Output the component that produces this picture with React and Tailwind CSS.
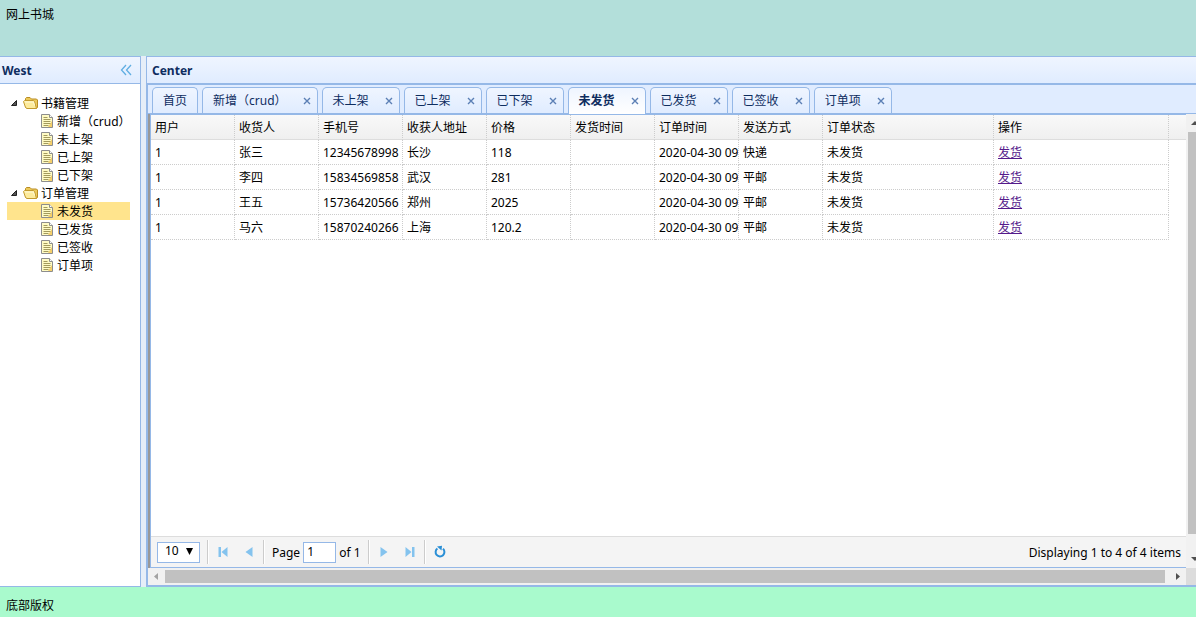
import React from "react";

const bookPages = ["新增（crud）", "未上架", "已上架", "已下架"];
const orderPages = ["未发货", "已发货", "已签收", "订单项"];
const tabs = ["首页", ...bookPages, ...orderPages];

const columns = [
  { title: "用户", width: "w-[84px]" },
  { title: "收货人", width: "w-[84px]" },
  { title: "手机号", width: "w-[84px]" },
  { title: "收获人地址", width: "w-[84px]" },
  { title: "价格", width: "w-[84px]" },
  { title: "发货时间", width: "w-[84px]" },
  { title: "订单时间", width: "w-[84px]" },
  { title: "发送方式", width: "w-[84px]" },
  { title: "订单状态", width: "w-[171px]" },
  { title: "操作", width: "w-[175px]" },
];

const rows = [
  ["1", "张三", "12345678998", "长沙", "118", "", "2020-04-30 09", "快递", "未发货"],
  ["1", "李四", "15834569858", "武汉", "281", "", "2020-04-30 09", "平邮", "未发货"],
  ["1", "王五", "15736420566", "郑州", "2025", "", "2020-04-30 09", "平邮", "未发货"],
  ["1", "马六", "15870240266", "上海", "120.2", "", "2020-04-30 09", "平邮", "未发货"],
];

function FolderIcon() {
  return (
    <svg width="16" height="16" viewBox="0 0 16 16" className="shrink-0" aria-hidden="true">
      <path d="M2.500 12V3.500L3.500 2.500H7L8.500 4H13.500L14.500 5V12.500L13.500 13.500H4z" fill="#ecc95a" stroke="#b98d25" strokeLinejoin="round" />
      <path d="M0.500 6.500L1.500 5.500H10.500L11.500 6.500L13.500 13.500H4L2.500 12.500z" fill="#fdeb9c" stroke="#c29a2e" strokeLinejoin="round" />
      <path d="M2 7H10.500L11.500 10.500" fill="none" stroke="#fffbdc" />
    </svg>
  );
}

function FileIcon() {
  return (
    <svg width="16" height="16" viewBox="0 0 16 16" className="shrink-0" aria-hidden="true">
      <path d="M2.5 1.5h8l3 3v10h-11z" fill="#fffbc4" stroke="#8d8d8d" />
      <path d="M13 8v6H9z" fill="#f5cf6a" />
      <path d="M10.5 1.5v3h3" fill="#fff" stroke="#8d8d8d" />
      <path d="M4.5 4.5h4M4.5 6.5h7M4.5 8.5h7M4.5 10.5h7M4.5 12.5h5" stroke="#a39a5c" />
    </svg>
  );
}

function TreeArrow() {
  return (
    <svg width="16" height="18" viewBox="0 0 16 18" className="shrink-0" aria-hidden="true">
      <path d="M9.5 6.5v5h-5z" fill="#555" stroke="#222" strokeLinejoin="round" />
    </svg>
  );
}

function TreeGroup({ label, items, selected }) {
  return (
    <li>
      <button type="button" className="flex h-[18px] w-full items-center text-left">
        <TreeArrow />
        <FolderIcon />
        <span className="px-0.5 pt-0.5">{label}</span>
      </button>
      <ul>
        {items.map((item) => (
          <li key={item}>
            <button
              type="button"
              className={
                item === selected
                  ? "flex h-[18px] w-full items-center whitespace-nowrap bg-[#ffe48d] pl-8 text-left"
                  : "flex h-[18px] w-full items-center whitespace-nowrap pl-8 text-left"
              }
            >
              <FileIcon />
              <span className="px-0.5 pt-0.5">{item}</span>
            </button>
          </li>
        ))}
      </ul>
    </li>
  );
}

function Tab({ label, active, closable }) {
  return (
    <div
      className={
        active
          ? "-mb-px flex items-center rounded-t-[5px] border border-b-0 border-[#95b8e7] bg-linear-to-b from-[#eff5ff] to-white font-bold text-[#0e2d5f]"
          : "flex items-center rounded-t-[5px] border border-b-0 border-[#95b8e7] bg-linear-to-b from-[#eff5ff] to-[#e0ecff] text-[#0e2d5f]"
      }
    >
      <button type="button" role="tab" aria-selected={active} className="h-full whitespace-nowrap px-2.5">
        {label}
      </button>
      {closable && (
        <button type="button" aria-label={`关闭 ${label}`} className="mx-[5px] flex h-4 w-2.5 items-center justify-center">
          <svg width="8" height="8" viewBox="0 0 8 8" aria-hidden="true">
            <path d="M1 1l6 6M7 1l-6 6" stroke="#5b7fb5" strokeWidth="1.4" />
          </svg>
        </button>
      )}
    </div>
  );
}

function Separator() {
  return <div className="mx-px h-6 w-0.5 border-l border-[#ccc] bg-white" />;
}

function PagerButton({ label, children }) {
  return (
    <button type="button" aria-label={label} className="flex h-[26px] w-[26px] items-center justify-center">
      <svg width="16" height="16" viewBox="0 0 16 16" aria-hidden="true">
        {children}
      </svg>
    </button>
  );
}

function Pager() {
  return (
    <div className="flex h-[31px] shrink-0 items-center border-t border-[#ddd] bg-[#f4f4f4] pl-1.5 pr-[5px]">
      <div className="relative mr-1.5">
        <select
          aria-label="每页条数"
          defaultValue="10"
          className="block h-[21px] w-[43px] appearance-none border border-[#95b8e7] bg-white pb-0.5 pl-[7px] leading-none"
        >
          <option>10</option>
          <option>20</option>
          <option>30</option>
        </select>
        <svg width="7" height="7" viewBox="0 0 7 7" className="pointer-events-none absolute right-[7px] top-1.5" aria-hidden="true">
          <path d="M0 0h7L3.500 7z" fill="#000" />
        </svg>
      </div>
      <Separator />
      <PagerButton label="第一页">
        <path d="M3.500 3h2.500v10H3.500zM12.500 3v10L6.500 8z" fill="#84c3ee" />
      </PagerButton>
      <PagerButton label="上一页">
        <path d="M11.500 3v10L4.500 8z" fill="#84c3ee" />
      </PagerButton>
      <Separator />
      <label className="ml-1.5 flex items-center">
        <span className="pt-0.5">Page</span>
        <input
          type="text"
          defaultValue="1"
          className="mx-[3px] h-[21px] w-[33px] border border-[#95b8e7] bg-white px-[3px] pb-0.5 outline-none"
        />
      </label>
      <span className="mr-1.5 pt-0.5">of 1</span>
      <Separator />
      <PagerButton label="下一页">
        <path d="M4.500 3v10L11.500 8z" fill="#84c3ee" />
      </PagerButton>
      <PagerButton label="最后一页">
        <path d="M3.500 3v10L9.500 8zM10 3h2.500v10H10z" fill="#84c3ee" />
      </PagerButton>
      <Separator />
      <PagerButton label="刷新">
        <path d="M11 4.800A4.400 4.400 0 1 1 5.400 4.500" fill="none" stroke="#2a8fd6" strokeWidth="2" />
        <path d="M5 2.500L10 1.800L9.500 6.500z" fill="#2a8fd6" />
      </PagerButton>
      <span className="ml-auto whitespace-nowrap pt-0.5">Displaying 1 to 4 of 4 items</span>
    </div>
  );
}

function OrderTable() {
  return (
    <table className="w-full table-fixed border-separate border-spacing-0 text-left">
      <colgroup>
        {columns.map((c) => (
          <col key={c.title} className={c.width} />
        ))}
        <col />
      </colgroup>
      <thead>
        <tr className="h-[25px] bg-linear-to-b from-[#f9f9f9] to-[#efefef]">
          {columns.map((c) => (
            <th
              key={c.title}
              className="overflow-hidden whitespace-nowrap border-b border-r border-b-[#ddd] border-r-[#ccc] p-0 pl-1 pt-0.5 font-normal [border-right-style:dotted]"
            >
              {c.title}
            </th>
          ))}
          <td className="border-b border-[#ddd] p-0" />
        </tr>
      </thead>
      <tbody>
        {rows.map((row) => (
          <tr key={row[2]} className="h-[25px]">
            {row.map((value, i) => (
              <td key={i} className="overflow-hidden whitespace-nowrap border-b border-r border-dotted border-[#ccc] p-0 pl-1 pt-0.5">
                {value}
              </td>
            ))}
            <td className="border-b border-r border-dotted border-[#ccc] p-0 pl-1 pt-0.5">
              <a href="#send" className="text-[#551a8b] underline">
                发货
              </a>
            </td>
            <td />
          </tr>
        ))}
      </tbody>
    </table>
  );
}

function VerticalScrollbar() {
  return (
    <div className="flex w-2.5 shrink-0 flex-col overflow-hidden bg-[#f1f1f1] pl-0.5" aria-hidden="true">
      <svg width="17" height="18" viewBox="0 0 17 18" className="shrink-0">
        <path d="M3 11l4-4 4 4z" fill="#505050" />
      </svg>
      <div className="w-full flex-1 bg-[#c1c1c1]" />
      <div className="h-4 shrink-0" />
      <svg width="17" height="18" viewBox="0 0 17 18" className="shrink-0">
        <path d="M3 7l4 4 4-4z" fill="#505050" />
      </svg>
    </div>
  );
}

function HorizontalScrollbar() {
  return (
    <div className="flex h-[17px] shrink-0" aria-hidden="true">
      <div className="flex flex-1 items-center bg-[#f1f1f1]">
        <svg width="17" height="17" viewBox="0 0 17 17">
          <path d="M10 5v7L6 8.500z" fill="#a3a3a3" />
        </svg>
        <div className="h-[13px] flex-1 bg-[#c1c1c1]" />
        <svg width="21" height="17" viewBox="0 0 21 17">
          <path d="M11 5v7l4-3.500z" fill="#505050" />
        </svg>
      </div>
      <div className="w-2.5 bg-[#dcdcdc]" />
    </div>
  );
}

export default function App() {
  return (
    <div className="flex min-h-screen flex-col bg-[#e6eef8] font-['Noto_Sans','Noto_Sans_CJK_SC',sans-serif] text-[12px] leading-[18px] text-black">
      <header className="h-14 shrink-0 bg-[#b3dfda] p-1.5">网上书城</header>

      <div className="flex flex-1 gap-[5px]">
        <aside className="flex w-[141px] shrink-0 flex-col border-y border-r border-[#95b8e7] bg-white">
          <div className="flex h-[27px] items-center justify-between border-b border-[#95b8e7] bg-linear-to-b from-[#eff5ff] to-[#e0ecff] pl-0.5 pr-2">
            <h2 className="pt-0.5 font-bold text-[#0e2d5f]">West</h2>
            <button type="button" aria-label="折叠">
              <svg width="12" height="12" viewBox="0 0 12 12" aria-hidden="true">
                <path d="M6 1L1.500 6 6 11M11 1L6.500 6 11 11" fill="none" stroke="#60aee2" strokeWidth="1.300" />
              </svg>
            </button>
          </div>
          <ul className="py-2.5 pl-[7px] pr-2.5">
            <TreeGroup label="书籍管理" items={bookPages} />
            <TreeGroup label="订单管理" items={orderPages} selected="未发货" />
          </ul>
        </aside>

        <main className="flex min-w-0 flex-1 flex-col border-y border-l border-[#95b8e7]">
          <div className="flex h-[27px] shrink-0 items-center border-b border-[#95b8e7] bg-linear-to-b from-[#eff5ff] to-[#e0ecff] pl-[5px]">
            <h2 className="pt-0.5 font-bold text-[#0e2d5f]">Center</h2>
          </div>
          <div className="flex flex-1 flex-col border-y border-l border-[#95b8e7]">
            <div role="tablist" className="flex h-[29px] shrink-0 gap-1 border-b border-[#95b8e7] bg-[#e0ecff] pl-1 pt-0.5">
              {tabs.map((t, i) => (
                <Tab key={t} label={t} active={t === "未发货"} closable={i > 0} />
              ))}
            </div>
            <div className="flex flex-1">
              <div className="flex min-w-0 flex-1 border-l-2 border-[#999]">
                <div className="flex min-w-0 flex-1 flex-col border-y border-l border-[#95b8e7] bg-white">
                  <div className="flex-1 overflow-hidden">
                    <OrderTable />
                  </div>
                  <Pager />
                </div>
              </div>
              <VerticalScrollbar />
            </div>
            <HorizontalScrollbar />
          </div>
        </main>
      </div>

      <footer className="h-[30px] shrink-0 bg-[#a9facd] px-1.5 py-2.5">底部版权</footer>
    </div>
  );
}
